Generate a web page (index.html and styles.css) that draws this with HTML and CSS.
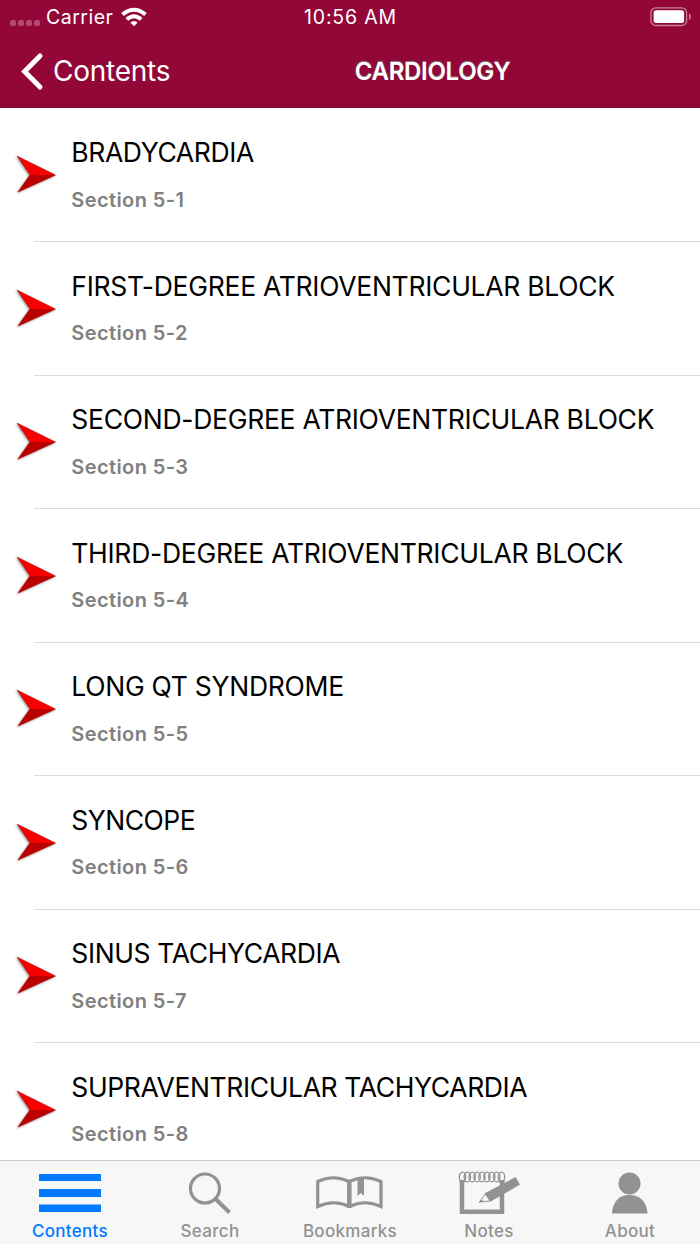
FILE: index.html
```html
<!DOCTYPE html>
<html lang="en">
<head>
<meta charset="utf-8">
<title>Cardiology</title>
<link rel="stylesheet" href="styles.css">
</head>
<body>
<svg class="defs" width="0" height="0">
  <symbol id="arrow" viewBox="0 0 46 46">
    <path d="M5 8 43.500 27 6 44 18 27Z" fill="#f80000"/>
    <path d="M18 27H43.500L6 44Z" fill="#bb0000"/>
    <path d="M5 8 43.500 27 6 44 18 27Z" fill="none" stroke="#a01010" stroke-width=".5"/>
  </symbol>
</svg>
<div class="screen">
  <header class="header">
    <div class="status">
      <div class="carrier">
        <span class="dots"><i></i><i></i><i></i><i></i></span>
        <span class="carrier-name">Carrier</span>
        <svg class="wifi" width="26" height="20" viewBox="0 0 26 20"><g fill="none" stroke="#fff" stroke-width="3.900"><path d="M1.500 7.600Q13 -2.200 24.500 7.600"/><path d="M5.800 12.400Q13 6 20.200 12.400"/></g><path d="M9.300 15.600Q13 12.500 16.700 15.600L13 19.300Z" fill="#fff"/></svg>
      </div>
      <span class="time">10:56 AM</span>
      <svg class="battery" width="42" height="20" viewBox="0 0 42 20"><rect x="2" y=".8" width="35.600" height="17.700" rx="4.800" fill="none" stroke="#c4819a" stroke-width="1.300"/><rect x="4.600" y="3.300" width="30.500" height="12.800" rx="2.500" fill="#fff"/><path d="M40 6.300Q42 7.200 42 9.600T40 13Z" fill="#c4819a"/></svg>
    </div>
    <nav class="navbar">
      <div class="back"><svg width="24" height="40" viewBox="0 0 24 40"><path d="M20 5 4.600 20.500 20 36" fill="none" stroke="#fff" stroke-width="5" stroke-linecap="round" stroke-linejoin="miter"/></svg><span>Contents</span></div>
      <h1 class="title">CARDIOLOGY</h1>
    </nav>
  </header>
  <main class="list">
    <div class="row"><svg class="arrow"><use href="#arrow"/></svg><div class="cell"><h2 class="t1">BRADYCARDIA</h2><p>Section 5-1</p></div></div>
    <div class="row"><svg class="arrow"><use href="#arrow"/></svg><div class="cell"><h2 class="t2">FIRST-DEGREE ATRIOVENTRICULAR BLOCK</h2><p>Section 5-2</p></div></div>
    <div class="row"><svg class="arrow"><use href="#arrow"/></svg><div class="cell"><h2 class="t3">SECOND-DEGREE ATRIOVENTRICULAR BLOCK</h2><p>Section 5-3</p></div></div>
    <div class="row"><svg class="arrow"><use href="#arrow"/></svg><div class="cell"><h2 class="t4">THIRD-DEGREE ATRIOVENTRICULAR BLOCK</h2><p>Section 5-4</p></div></div>
    <div class="row"><svg class="arrow"><use href="#arrow"/></svg><div class="cell"><h2 class="t5">LONG QT SYNDROME</h2><p>Section 5-5</p></div></div>
    <div class="row"><svg class="arrow"><use href="#arrow"/></svg><div class="cell"><h2 class="t6">SYNCOPE</h2><p>Section 5-6</p></div></div>
    <div class="row"><svg class="arrow"><use href="#arrow"/></svg><div class="cell"><h2 class="t7">SINUS TACHYCARDIA</h2><p>Section 5-7</p></div></div>
    <div class="row"><svg class="arrow"><use href="#arrow"/></svg><div class="cell"><h2 class="t8">SUPRAVENTRICULAR TACHYCARDIA</h2><p>Section 5-8</p></div></div>
  </main>
  <footer class="tabs">
    <div class="tab active"><svg width="70" height="48" viewBox="0 0 70 48"><path d="M4 6H66V13H4ZM4 21H66V29H4ZM4 36.500H66V44H4Z" fill="currentColor"/></svg><span>Contents</span></div>
    <div class="tab"><svg width="70" height="48" viewBox="0 0 70 48"><g fill="none" stroke="currentColor"><circle cx="30" cy="20.500" r="14.500" stroke-width="3.200"/><path d="M40 30.500 54.500 44.500" stroke-width="4"/></g></svg><span>Search</span></div>
    <div class="tab"><svg width="70" height="48" viewBox="0 0 70 48"><path d="M2.700 13.500Q18 6 34.300 13.500Q50 6 66 13.500V38.500Q50 31 34.300 38.500Q19 31 2.700 38.500Z" fill="none" stroke="currentColor" stroke-width="3.200"/><path d="M34.300 12.500V40" stroke="currentColor" stroke-width="4.500"/><path d="M42.500 10H49V28L45.700 25 42.500 28Z" fill="currentColor"/></svg><span>Bookmarks</span></div>
    <div class="tab notes"><svg width="70" height="48" viewBox="0 0 70 48"><path d="M48 13V43.700H8V13" fill="none" stroke="currentColor" stroke-width="4.500"/><path d="M5.500 13.500H10.500M45.500 13.500H50.500" stroke="currentColor" stroke-width="3"/><g fill="none" stroke="currentColor" stroke-width="1.300"><ellipse cx="8.500" cy="9" rx="3.200" ry="4.900"/><ellipse cx="13.300" cy="9" rx="3.200" ry="4.900"/><ellipse cx="18.200" cy="9" rx="3.200" ry="4.900"/><ellipse cx="23.100" cy="9" rx="3.200" ry="4.900"/><ellipse cx="28" cy="9" rx="3.200" ry="4.900"/><ellipse cx="32.900" cy="9" rx="3.200" ry="4.900"/><ellipse cx="37.800" cy="9" rx="3.200" ry="4.900"/><ellipse cx="42.700" cy="9" rx="3.200" ry="4.900"/><ellipse cx="47.500" cy="9" rx="3.200" ry="4.900"/></g><path d="M31 25.500 61.500 9.500 65.500 16.500 36 33.500Z" fill="currentColor" stroke="currentColor" stroke-width=".8"/><path d="M31.500 26 25.300 34 36 33Z" fill="#f7f7f7" stroke="currentColor" stroke-width="1"/><path d="M27.500 31.500 25 34.500 29.500 33.500Z" fill="currentColor"/></svg><span>Notes</span></div>
    <div class="tab"><svg width="70" height="48" viewBox="0 0 70 48"><circle cx="34.500" cy="15.500" r="11" fill="currentColor"/><path d="M17 45.500Q17.500 35 24.500 29.500 34.500 24 44.500 29.500 52 35 52.500 45.500Z" fill="currentColor"/></svg><span>About</span></div>
  </footer>
</div>
</body>
</html>
```
FILE: styles.css
```css
* { box-sizing: border-box; margin: 0; padding: 0; }
body { width: 700px; height: 1244px; overflow: hidden; background: #fff; font-family: Inter, "Liberation Sans", sans-serif; }
svg { display: block; flex: none; }
.defs { position: absolute; }
.screen { display: flex; flex-direction: column; height: 1244px; }
.header { flex: none; height: 108px; background: #930638; color: #fff; border-bottom: 1px solid #870433; }
.status { display: grid; grid-template-columns: 1fr auto 1fr; height: 34px; align-items: center; font-size: 19.500px; padding: 0 9px 0 10px; }
.carrier { display: flex; align-items: center; }
.dots { display: flex; gap: 2.300px; padding-top: 12px; width: 36px; }
.dots i { width: 5.700px; height: 5.700px; border-radius: 2px; background: #b14b70; }
.carrier-name { letter-spacing: .5px; width: 75px; }
.wifi { margin-top: -1px; }
.time { letter-spacing: .8px; }
.battery { justify-self: end; margin-top: -1px; }
.navbar { display: grid; grid-template-columns: 320px 185px; height: 74px; align-items: center; padding-left: 20px; }
.back { display: flex; align-items: center; gap: 9px; font-size: 28px; letter-spacing: -.25px; }
.title { text-align: center; font-size: 24px; font-weight: 600; letter-spacing: -.3px; text-shadow: 0 -1px 1px #888; white-space: nowrap; }
.list { flex: 1; min-height: 0; overflow: hidden; padding-top: .5px; }
.row { display: flex; height: 133.500px; padding-left: 12px; }
.arrow { width: 46px; height: 46px; margin: 39.500px -24px 0 0; filter: drop-shadow(-1px 1px 1px #0006); }
.cell { flex: 1; border-bottom: 1px solid #dcdcde; padding: 26.500px 0 0 37.300px; }
.row h2 { font-size: 26.500px; font-weight: 400; line-height: 34px; white-space: nowrap; color: #000; }
.row .t1, .row .t7, .row .t8 { letter-spacing: -.38px; }
.row .t2, .row .t3, .row .t4, .row .t5 { letter-spacing: -.28px; }
.row .t6 { letter-spacing: -.5px; }
.row p { margin-top: 16.500px; font-size: 20px; font-weight: 600; line-height: 28px; letter-spacing: .4px; color: #808080; }
.tabs { flex: none; height: 84px; display: grid; grid-template-columns: repeat(5, 140px); border-top: 1px solid #c8c8c9; background: #f7f7f7; }
.tab { display: flex; flex-direction: column; align-items: center; color: #929292; padding-top: 7px; font-size: 17px; font-weight: 500; letter-spacing: .3px; line-height: 20px; }
.tab span { margin-top: 5px; }
.notes svg, .notes span { transform: translateX(-1px); }
.active { color: #007aff; }
```
